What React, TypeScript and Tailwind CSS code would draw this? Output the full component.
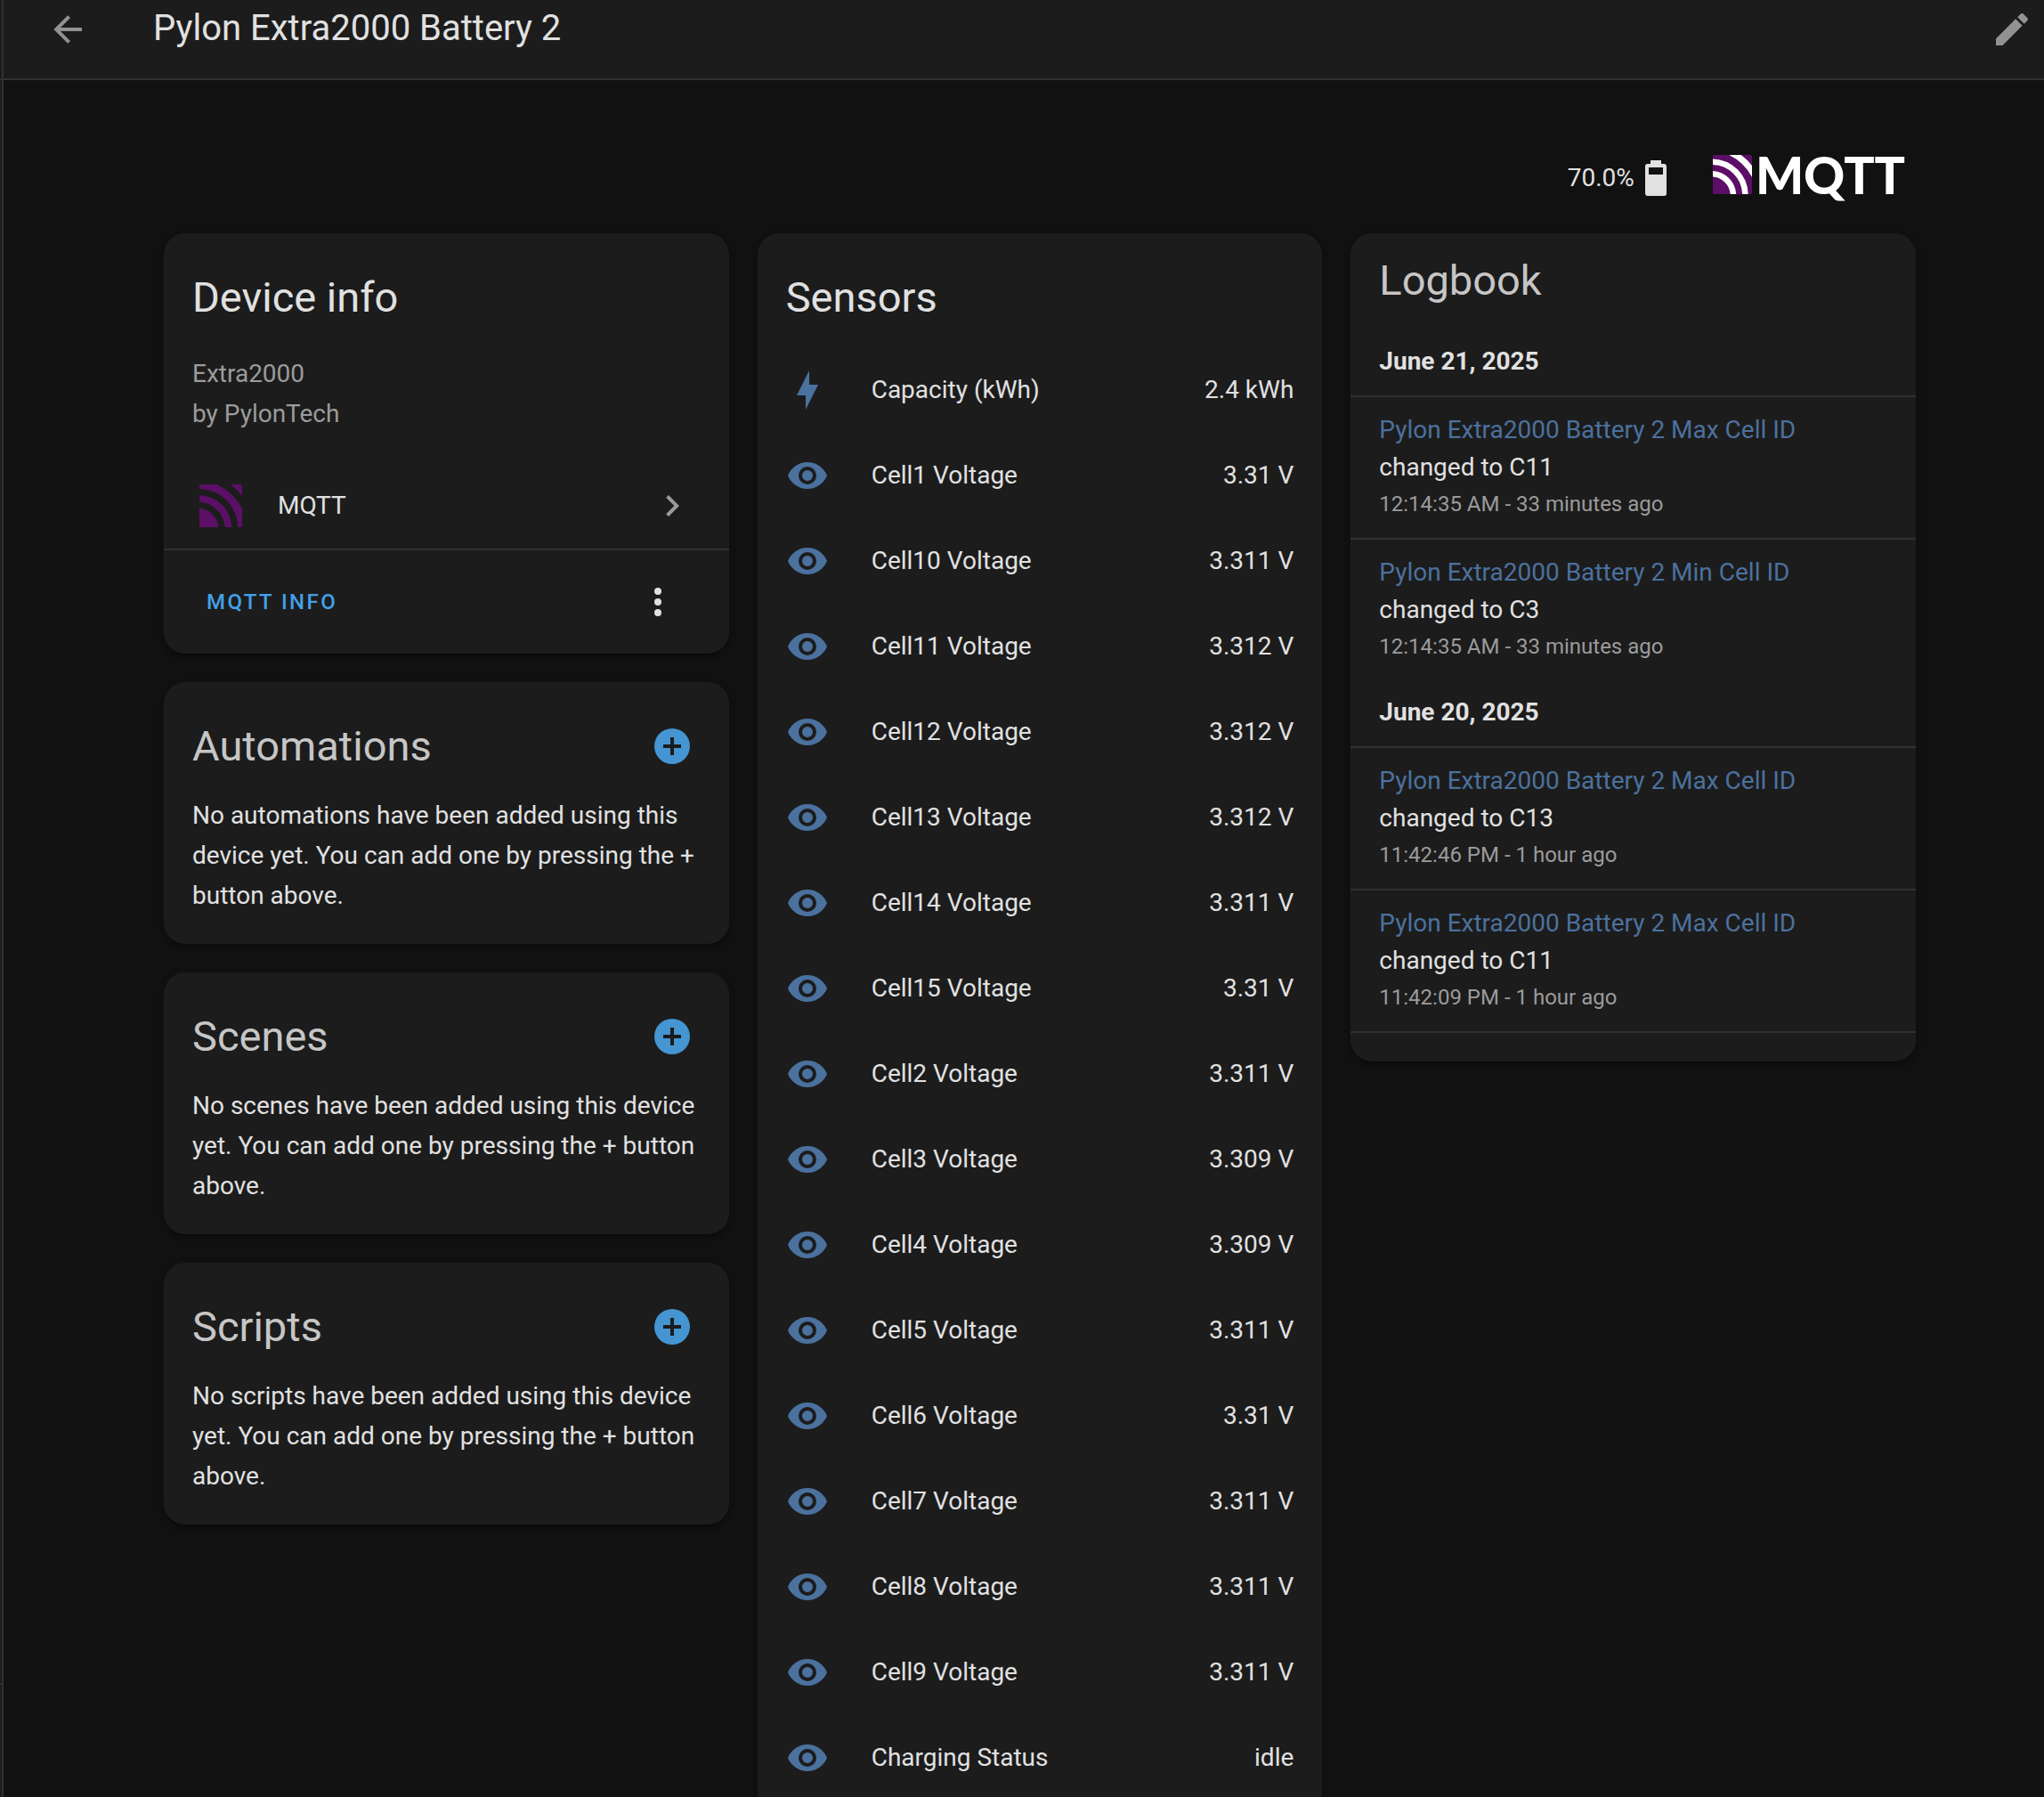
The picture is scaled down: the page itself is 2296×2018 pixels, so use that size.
import type { ReactNode } from "react";

const MDI = {
  arrowLeft: "M20,11V13H8L13.5,18.5L12.08,19.92L4.16,12L12.08,4.08L13.5,5.5L8,11H20Z",
  pencil:
    "M20.71,7.04C21.1,6.65 21.1,6 20.71,5.63L18.37,3.29C18,2.9 17.35,2.9 16.96,3.29L15.12,5.12L18.87,8.87M3,17.25V21H6.75L17.81,9.93L14.06,6.18L3,17.25Z",
  battery70:
    "M16,10H8V6H16M16.67,4H15V2H9V4H7.33A1.33,1.33 0 0,0 6,5.33V20.67C6,21.4 6.6,22 7.33,22H16.67A1.33,1.33 0 0,0 18,20.67V5.33C18,4.6 17.4,4 16.67,4Z",
  chevronRight: "M8.59,16.58L13.17,12L8.59,7.41L10,6L16,12L10,18L8.59,16.58Z",
  dots: "M12,16A2,2 0 0,1 14,18A2,2 0 0,1 12,20A2,2 0 0,1 10,18A2,2 0 0,1 12,16M12,10A2,2 0 0,1 14,12A2,2 0 0,1 12,14A2,2 0 0,1 10,12A2,2 0 0,1 12,10M12,4A2,2 0 0,1 14,6A2,2 0 0,1 12,8A2,2 0 0,1 10,6A2,2 0 0,1 12,4Z",
  plusCircle: "M17,13H13V17H11V13H7V11H11V7H13V11H17M12,2A10,10 0 0,0 2,12A10,10 0 0,0 12,22A10,10 0 0,0 22,12A10,10 0 0,0 12,2Z",
  flash: "M11,15H6L13,1V9H18L11,23V15Z",
  eye: "M12,9A3,3 0 0,0 9,12A3,3 0 0,0 12,15A3,3 0 0,0 15,12A3,3 0 0,0 12,9M12,17A5,5 0 0,1 7,12A5,5 0 0,1 12,7A5,5 0 0,1 17,12A5,5 0 0,1 12,17M12,4.5C7,4.5 2.73,7.61 1,12C2.73,16.39 7,19.5 12,19.5C17,19.5 21.27,16.39 23,12C21.27,7.61 17,4.5 12,4.5Z",
};

function Icon({ path, className = "" }: { path: string; className?: string }) {
  return (
    <svg viewBox="0 0 24 24" aria-hidden="true" className={`size-12 shrink-0 fill-current ${className}`}>
      <path d={path} />
    </svg>
  );
}

function MqttMark({ id, wave, className }: { id: string; wave: string; className: string }) {
  return (
    <svg viewBox="0 0 44 44" aria-hidden="true" className={className}>
      <clipPath id={id}>
        <rect width="44" height="44" rx="1.5" />
      </clipPath>
      <g clipPath={`url(#${id})`}>
        <rect width="44" height="44" fill="#5c0f66" />
        <g fill="none" stroke={wave} strokeWidth="6.5">
          <path d="M-2,21.2C12,21.2 23,32 23,46" />
          <path d="M-2,7.7C20,7.7 36.5,24 36.5,46" />
          <path d="M18,-4C30,1.5 40,10 47,23" strokeWidth="7" />
        </g>
      </g>
    </svg>
  );
}

function Card({ title, muted = false, action, children }: { title: string; muted?: boolean; action?: ReactNode; children: ReactNode }) {
  return (
    <section className="rounded-3xl bg-[#1c1c1c] pt-11 shadow-[0_4px_4px_rgba(0,0,0,0.14),0_2px_10px_rgba(0,0,0,0.12),0_6px_2px_-4px_rgba(0,0,0,0.2)]">
      <div className="flex h-14 items-center justify-between pr-10 pl-8">
        <h2 className={`text-[47px] leading-14 ${muted ? "text-[#c6c6c6]" : "text-[#e1e1e1]"}`}>{title}</h2>
        {action}
      </div>
      {children}
    </section>
  );
}

function AddCard({ title, noun }: { title: string; noun: string }) {
  return (
    <Card
      title={title}
      muted
      action={
        <button type="button" aria-label={`Add ${noun}`} className="text-[#4495d1]">
          <Icon path={MDI.plusCircle} />
        </button>
      }
    >
      <p className="px-8 pt-[27px] pb-8 leading-[45px]">
        {`No ${noun} have been added using this device yet. You can add one by pressing the + button above.`}
      </p>
    </Card>
  );
}

const SENSORS: [string, string][] = [
  ["Capacity (kWh)", "2.4 kWh"],
  ["Cell1 Voltage", "3.31 V"],
  ["Cell10 Voltage", "3.311 V"],
  ["Cell11 Voltage", "3.312 V"],
  ["Cell12 Voltage", "3.312 V"],
  ["Cell13 Voltage", "3.312 V"],
  ["Cell14 Voltage", "3.311 V"],
  ["Cell15 Voltage", "3.31 V"],
  ["Cell2 Voltage", "3.311 V"],
  ["Cell3 Voltage", "3.309 V"],
  ["Cell4 Voltage", "3.309 V"],
  ["Cell5 Voltage", "3.311 V"],
  ["Cell6 Voltage", "3.31 V"],
  ["Cell7 Voltage", "3.311 V"],
  ["Cell8 Voltage", "3.311 V"],
  ["Cell9 Voltage", "3.311 V"],
  ["Charging Status", "idle"],
];

const LOG = [
  {
    date: "June 21, 2025",
    last: false,
    entries: [
      { name: "Pylon Extra2000 Battery 2 Max Cell ID", state: "C11", time: "12:14:35 AM - 33 minutes ago" },
      { name: "Pylon Extra2000 Battery 2 Min Cell ID", state: "C3", time: "12:14:35 AM - 33 minutes ago" },
    ],
  },
  {
    date: "June 20, 2025",
    last: true,
    entries: [
      { name: "Pylon Extra2000 Battery 2 Max Cell ID", state: "C13", time: "11:42:46 PM - 1 hour ago" },
      { name: "Pylon Extra2000 Battery 2 Max Cell ID", state: "C11", time: "11:42:09 PM - 1 hour ago" },
    ],
  },
];

function Logbook() {
  return (
    <section className="rounded-3xl bg-[#1c1c1c] pt-[25px] pb-8 shadow-[0_4px_4px_rgba(0,0,0,0.14),0_2px_10px_rgba(0,0,0,0.12),0_6px_2px_-4px_rgba(0,0,0,0.2)]">
      <h2 className="mb-[27px] px-8 text-[47px] leading-14 text-[#c6c6c6]">Logbook</h2>
      {LOG.map((group) => (
        <div key={group.date}>
          <h3 className="px-8 pt-[15px] pb-[17px] leading-[42px] font-bold">{group.date}</h3>
          <ul className={`divide-y-2 divide-[#313131] border-t-2 border-[#313131] ${group.last ? "border-b-2" : ""}`}>
            {group.entries.map((entry, i) => (
              <li key={i} className="px-8 pt-4 pb-[18px]">
                <div className="leading-[42px]">
                  <a href="#entity" className="block text-[#4b719e]">
                    {entry.name}
                  </a>
                  {`changed to ${entry.state}`}
                </div>
                <div className="text-2xl leading-10 text-[#9b9b9b]">{entry.time}</div>
              </li>
            ))}
          </ul>
        </div>
      ))}
    </section>
  );
}

export default function App() {
  return (
    <div className="flex h-screen overflow-hidden bg-[#111111] font-['Roboto',sans-serif] text-[28px] text-[#e1e1e1]">
      <aside className="flex w-1 shrink-0 flex-col border-r-2 border-[#313131] bg-[#1c1c1c]">
        <div className="h-[90px] border-b-2 border-[#313131]" />
        <div className="flex-1" />
        <div className="h-32 border-t-2 border-[#313131]" />
      </aside>
      <div className="min-w-0 flex-1">
        <header className="flex h-[90px] items-center border-b-2 border-[#313131] bg-[#1c1c1c] pr-3 pb-[22px] pl-12">
          <a href="#back" aria-label="Back" className="mr-18 text-[#929292]">
            <Icon path={MDI.arrowLeft} />
          </a>
          <h1 className="flex-1 pb-0.5 text-[40px] leading-12">Pylon Extra2000 Battery 2</h1>
          <button type="button" aria-label="Edit device" className="text-[#929292]">
            <Icon path={MDI.pencil} />
          </button>
        </header>

        <main className="pr-36 pl-45">
          <div className="flex h-[172px] items-center justify-end pt-12 pr-3">
            <span className="leading-10">70.0%</span>
            <Icon path={MDI.battery70} className="mr-10" />
            <div className="flex items-center gap-1 pb-2">
              <MqttMark id="brand-clip" wave="#ffffff" className="size-11" />
              <span className="font-['Lato',sans-serif] text-[57px] leading-14 font-black text-white">MQTT</span>
            </div>
          </div>

          <div className="grid grid-cols-3 items-start gap-8">
            <div className="flex flex-col gap-8">
              <Card title="Device info">
                <div className="px-8 pt-[35px] pb-[33px] leading-[45px] text-[#9b9b9b]">
                  <div>Extra2000</div>
                  <div>by PylonTech</div>
                </div>
                <a href="#integration" className="flex h-24 items-center pr-10 pl-10">
                  <MqttMark id="device-clip" wave="#1c1c1c" className="mr-10 size-12" />
                  <span className="flex-1">MQTT</span>
                  <Icon path={MDI.chevronRight} className="text-[#9b9b9b]" />
                </a>
                <div className="flex h-[118px] items-center justify-between border-t-2 border-[#313131] pr-14 pl-12">
                  <button type="button" className="text-2xl font-medium tracking-widest text-[#43a0e8] uppercase">
                    MQTT info
                  </button>
                  <button type="button" aria-label="More actions">
                    <Icon path={MDI.dots} />
                  </button>
                </div>
              </Card>
              <AddCard title="Automations" noun="automations" />
              <AddCard title="Scenes" noun="scenes" />
              <AddCard title="Scripts" noun="scripts" />
            </div>

            <Card title="Sensors">
              <ul className="px-8 pt-7 pb-8">
                {SENSORS.map(([name, value], i) => (
                  <li key={name} className="flex h-24 items-center">
                    <Icon path={i === 0 ? MDI.flash : MDI.eye} className="mr-12 text-[#4b719e]" />
                    <span className="flex-1">{name}</span>
                    <span>{value}</span>
                  </li>
                ))}
              </ul>
            </Card>

            <Logbook />
          </div>
        </main>
      </div>
    </div>
  );
}
